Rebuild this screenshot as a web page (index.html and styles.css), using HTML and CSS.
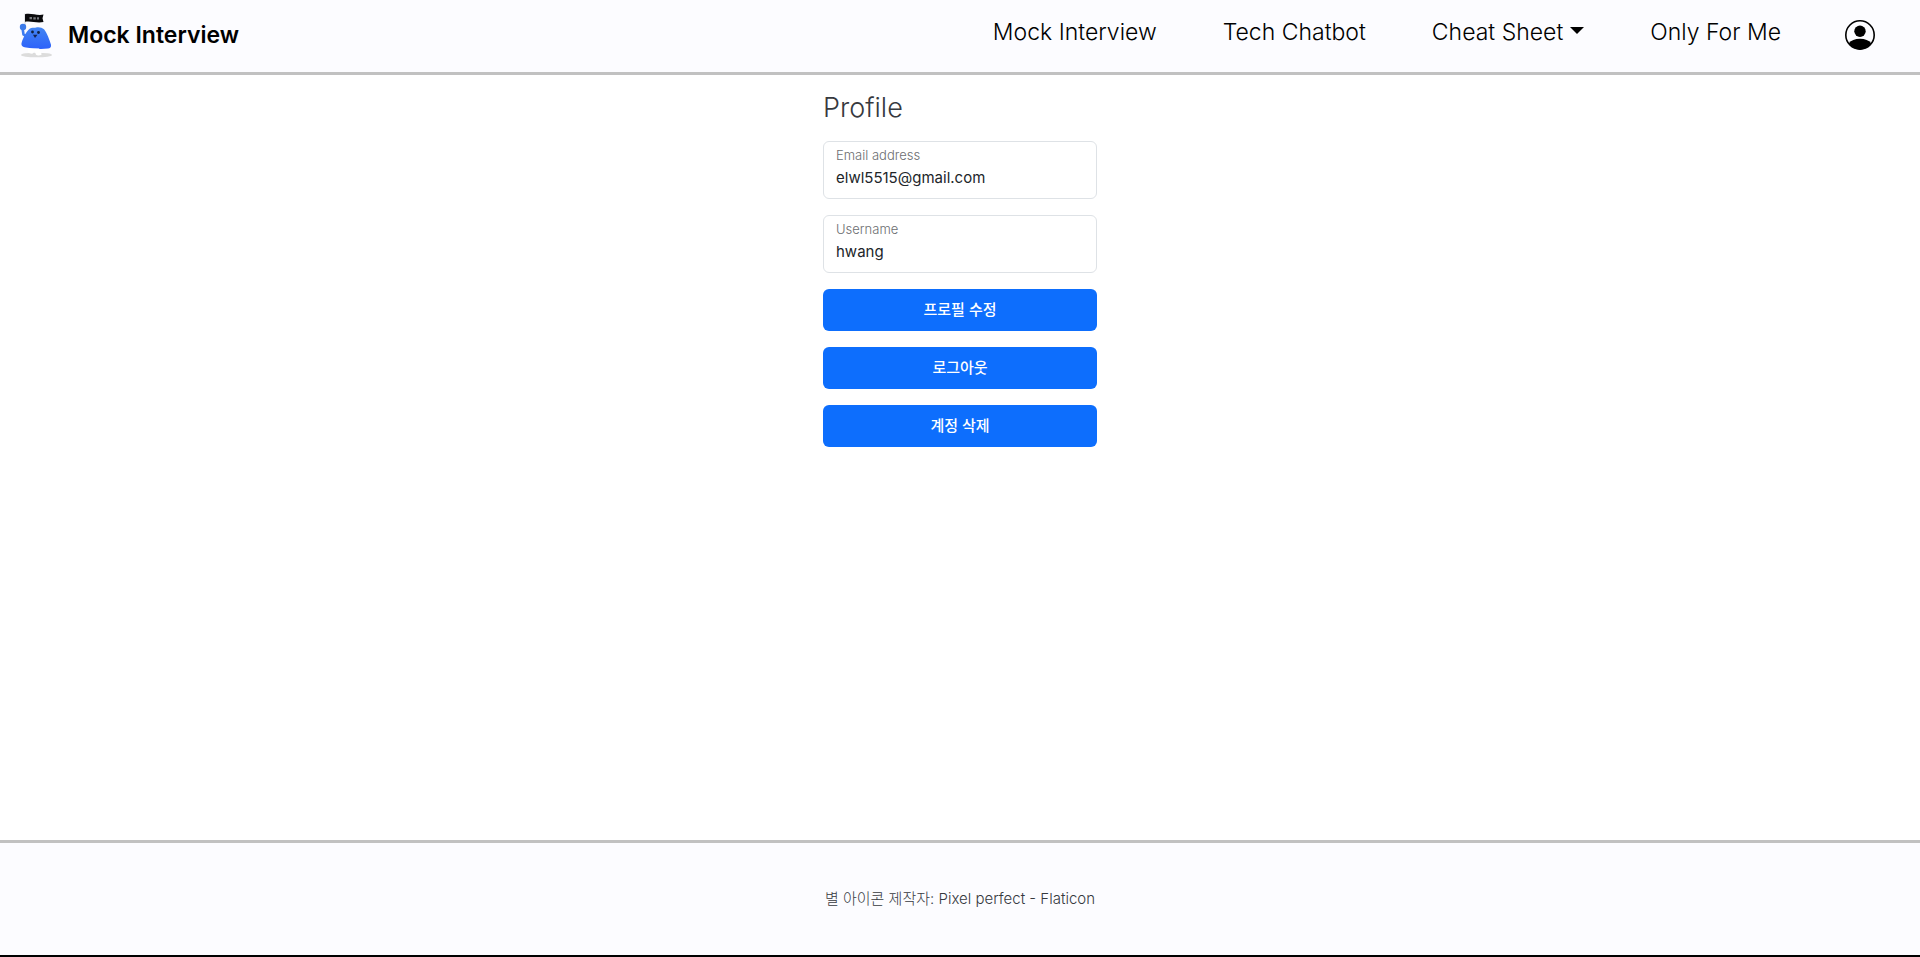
FILE: index.html
```html
<!DOCTYPE html>
<html lang="ko">
<head>
<meta charset="utf-8">
<meta name="viewport" content="width=device-width, initial-scale=1">
<title>Mock Interview</title>
<link rel="stylesheet" href="styles.css">
</head>
<body>
<header class="header">
  <a class="brand" href="#">
    <svg class="brand-logo" viewBox="0 0 36 48" aria-hidden="true">
      <defs>
        <linearGradient id="body-fill" x1="0" y1="0" x2="0" y2="1">
          <stop offset="0" stop-color="#4385f2"/>
          <stop offset="1" stop-color="#2d62fa"/>
        </linearGradient>
      </defs>
      <ellipse cx="18.500" cy="44" rx="15.500" ry="2.300" fill="#dcdcdc"/>
      <path d="M7 2.500v12" stroke="#d4d7de" stroke-width="1.200"/>
      <path d="M7 3.200c6-1.600 12 2 18.500 .4l-1 3.600 1 3.800c-7 1.500-12.500-1.500-18.500-.2z" fill="#0b0b0d"/>
      <path d="M11.500 6h2.500v2.200h-2.500zM15.300 6.200h2.500v2.200h-2.500zM19 6.300h2v2.200h-2z" fill="#77797e"/>
      <path d="M4.500 17l1 6.500 5 3" fill="none" stroke="#3d7cf0" stroke-width="2.600"/>
      <circle cx="5" cy="16" r="3.200" fill="#3b7ae9"/>
      <path d="M12 17.500c2-1.500 4-.2 6-.9 3-.8 6 0 8 1.700 3 3.400 5.500 10.700 7 15.500 .5 2.500-1 3.500-3 3.700-7 .8-15 .3-22 -1-3.500-.6-5.300-2-4.300-5 1.600-5 4.300-11 8.300-14z" fill="url(#body-fill)"/>
      <path d="M10.500 37.500c-2 3 0 5.500 4 5.200l2-3 1.500 4c1.500 1.200 6.500 .8 5.500-1l-2.500-5.200z" fill="#fff"/>
      <circle cx="14.500" cy="21" r="1.400" fill="#11203f"/>
      <circle cx="20.500" cy="21.500" r="1.400" fill="#11203f"/>
      <path d="M15 23.700h4.500l-2.500 3.300z" fill="#142452"/>
    </svg>
    <span>Mock Interview</span>
  </a>
  <nav class="nav">
    <a class="nav-link" href="#">Mock Interview</a>
    <a class="nav-link" href="#">Tech Chatbot</a>
    <button class="nav-link nav-toggle" type="button" aria-haspopup="true">Cheat Sheet</button>
    <a class="nav-link" href="#">Only For Me</a>
    <a class="nav-link account" href="#" aria-label="Profile">
      <svg class="account-icon" viewBox="0 0 30 30" aria-hidden="true">
        <circle cx="15" cy="15" r="14.200" fill="none" stroke="#000" stroke-width="1.600"/>
        <circle cx="15" cy="11.300" r="5.700"/>
        <path d="M3.800 23.300C6 20.500 10 18.800 15 18.800s9 1.700 11.200 4.500A14.600 14.600 0 0 1 15 29.700 14.600 14.600 0 0 1 3.800 23.300z"/>
      </svg>
    </a>
  </nav>
</header>
<main class="main">
  <form class="profile">
    <h1 class="profile-title">Profile</h1>
    <div class="field">
      <label class="field-label" for="email">Email address</label>
      <input class="field-input" id="email" type="email" value="elwl5515@gmail.com" readonly>
    </div>
    <div class="field">
      <label class="field-label" for="username">Username</label>
      <input class="field-input" id="username" type="text" value="hwang" readonly>
    </div>
    <button class="button" type="button">프로필 수정</button>
    <button class="button" type="button">로그아웃</button>
    <button class="button" type="button">계정 삭제</button>
  </form>
</main>
<footer class="footer">
  <a class="credit" href="#">별 아이콘 제작자: Pixel perfect - Flaticon</a>
</footer>
</body>
</html>
```
FILE: styles.css
```css
* {
  box-sizing: border-box;
}

body {
  display: flex;
  flex-direction: column;
  min-height: 100vh;
  margin: 0;
  border-bottom: 2px solid #000;
  background: #fff;
  color: #36393e;
  font-family: Inter, "Noto Sans CJK KR", sans-serif;
  font-size: 15px;
  font-weight: 300;
  line-height: 24px;
}

a {
  color: inherit;
  text-decoration: none;
}

.header {
  display: flex;
  align-items: center;
  justify-content: space-between;
  flex-wrap: wrap;
  min-height: 75px;
  padding: 0 12px 0 18px;
  border-bottom: 3px solid #c1c1c1;
  background: #fcfcff;
  color: #000;
}

.brand {
  display: flex;
  align-items: center;
  gap: 14px;
  padding-bottom: 2px;
  font-size: 23px;
  font-weight: 600;
  line-height: 36px;
}

.brand-logo {
  width: 36px;
  height: 48px;
}

.nav {
  display: flex;
  flex-wrap: wrap;
  align-items: center;
  padding-bottom: 8px;
}

.nav-link {
  padding: 0 33px;
  border: 0;
  background: none;
  color: inherit;
  font: inherit;
  font-size: 23px;
  line-height: 36px;
}

.nav-toggle {
  display: flex;
  align-items: center;
  gap: 7px;
}

.nav-toggle::after {
  content: "";
  border-top: 7px solid;
  border-right: 7px solid transparent;
  border-left: 7px solid transparent;
  margin-bottom: 3px;
}

.account {
  padding-top: 6px;
  padding-left: 31px;
}

.account-icon {
  display: block;
  width: 30px;
  height: 30px;
}

.main {
  flex: 1;
  display: flex;
  justify-content: center;
  padding: 16px;
}

.profile {
  display: flex;
  flex-direction: column;
  gap: 16px;
  width: 274px;
}

.profile-title {
  margin: 0;
  font-size: 27px;
  font-weight: 300;
  line-height: 34px;
}

.field {
  display: flex;
  flex-direction: column;
  gap: 2px;
  padding: 4px 12px 8px;
  border: 1px solid #dee2e6;
  border-radius: 6px;
}

.field-label {
  color: #6c6e71;
  font-size: 13px;
  line-height: 18px;
}

.field-input {
  width: 100%;
  height: 24px;
  padding: 0;
  border: 0;
  outline: 0;
  background: none;
  color: #212529;
  font: inherit;
  font-weight: 400;
}

.button {
  height: 42px;
  padding: 0 12px;
  border: 0;
  border-radius: 6px;
  background: #0d6efd;
  color: #fff;
  font: inherit;
  font-weight: 500;
}

.footer {
  display: flex;
  justify-content: center;
  padding: 44px 16px;
  border-top: 3px solid #c1c1c1;
  background: #fcfcff;
}
```
